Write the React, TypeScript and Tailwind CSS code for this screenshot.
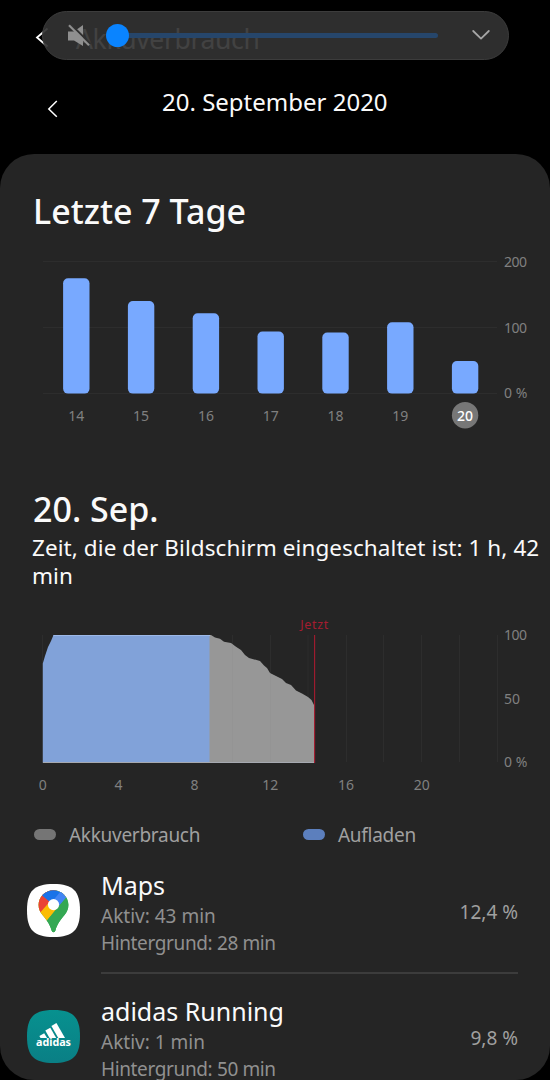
type Day = { day: string; top: number };
type AppUsage = { name: string; active: string; background: string; share: string; icon: React.ReactNode };

const days: Day[] = [
  { day: '14', top: 24.3 },
  { day: '15', top: 47 },
  { day: '16', top: 59.3 },
  { day: '17', top: 77.5 },
  { day: '18', top: 78.5 },
  { day: '19', top: 68.3 },
  { day: '20', top: 107 },
];

const SQUIRCLE = 'M26.5 0C46 0 53 7 53 26.5S46 53 26.5 53 0 46 0 26.5 7 0 26.5 0Z';

function MapsIcon() {
  return (
    <svg className="size-[53px]" viewBox="0 0 53 53">
      <defs>
        <clipPath id="pin">
          <path d="M26.5 6.2C18.3 6.2 11.6 12.8 11.6 20.8C11.6 25 13 28 15.5 31C19.5 36 22.6 39.5 24.5 46.2C25.1 48.8 27.9 48.8 28.5 46.2C30.4 39.5 33.5 36 37.5 31C40 28 41.4 25 41.4 20.8C41.4 12.8 34.7 6.2 26.5 6.2Z" />
        </clipPath>
      </defs>
      <path d={SQUIRCLE} fill="#fff" />
      <g clipPath="url(#pin)">
        <rect width="53" height="53" fill="#34a853" />
        <path d="M0 0H53L39.7 12.8L19 37.8L0 40Z" fill="#fbbc04" />
        <path d="M0 0H30L26.5 20.5L22.5 18L8 34.5Z" fill="#ea4335" />
        <path d="M11 8L22 17.2L26.5 20.6L37.3 8L30 0H14Z" fill="#1a73e8" />
        <path d="M23.5 19.5L36.5 4L45 8L30.5 23.8Z" fill="#4285f4" />
        <path d="M39.9 12.6L19.5 37L24 53H53V10Z" fill="#34a853" />
      </g>
      <circle cx="26.5" cy="20.6" r="5.6" fill="#fff" />
    </svg>
  );
}

function AdidasIcon() {
  return (
    <svg className="size-[53px]" viewBox="0 0 53 53">
      <defs>
        <linearGradient id="teal" x1="0" y1="0" x2="0" y2="1">
          <stop offset="0" stopColor="#07918f" />
          <stop offset="1" stopColor="#0a7f85" />
        </linearGradient>
      </defs>
      <path d={SQUIRCLE} fill="url(#teal)" />
      <path d="M24.4 16L29.4 13L38 28H31.3Z" fill="#fff" />
      <path d="M18.3 20.6L23.3 17.8L29.2 28H22.5Z" fill="#fff" />
      <path d="M12.4 26L17.2 23.2L20.1 28H13.5Z" fill="#fff" />
      <text x="26.5" y="36" textAnchor="middle" textLength="35" lengthAdjust="spacingAndGlyphs" fontSize="10.5" fontWeight="700" fill="#fff">
        adidas
      </text>
    </svg>
  );
}

const apps: AppUsage[] = [
  { name: 'Maps', active: 'Aktiv: 43 min', background: 'Hintergrund: 28 min', share: '12,4 %', icon: <MapsIcon /> },
  { name: 'adidas Running', active: 'Aktiv: 1 min', background: 'Hintergrund: 50 min', share: '9,8 %', icon: <AdidasIcon /> },
];

function VolumePanel() {
  return (
    <div className="absolute left-[42px] top-[11px] flex h-[49px] w-[467px] items-center rounded-full border border-[#3c3c3c] bg-[#323232]/92">
      <svg className="ml-[24px] h-[24px] w-[24px] shrink-0" viewBox="0 0 24 24">
        <path d="M1 7.5H7L16 1V22L7 16.5H1Z" fill="#8f8f8f" />
        <path d="M3.6 0.2L23.3 19.9" stroke="#303030" strokeWidth="2.2" />
        <path d="M2 1.2L22 21.2" stroke="#8f8f8f" strokeWidth="2.2" />
      </svg>
      <div className="relative ml-[16px] h-[5px] w-[331px] shrink-0">
        <div className="ml-[8px] h-[5px] w-[323px] rounded-full bg-[#26466b]" />
        <div className="absolute -left-[1px] -top-[9px] size-[23px] rounded-full bg-[#0a84ff]" />
      </div>
      <svg className="ml-[33px] mt-[-2px] h-[12px] w-[20px] shrink-0" viewBox="0 0 20 12" fill="none" stroke="#a6a6a6" strokeWidth="1.8" strokeLinecap="round" strokeLinejoin="round">
        <path d="M2.2 2L10 9.6L17.8 2" />
      </svg>
    </div>
  );
}

function WeekChart() {
  return (
    <svg className="block overflow-visible" width="550" height="182" viewBox="0 254 550 182" fontSize="14" fill="#808080">
      {[261.5, 327.5, 393.5].map((y) => (
        <path key={y} d={`M43 ${y}H497`} stroke="#2d2d2d" />
      ))}
      {days.map(({ day, top }, i) => {
        const cx = 76.3 + i * 64.8;
        const current = day === '20';
        return (
          <g key={day}>
            <rect x={cx - 13.2} y={top + 254} width="26.4" height={139.6 - top} rx="5" fill="#78a9ff" />
            {current && <circle cx={cx} cy="415.2" r="13.2" fill="#777" />}
            <text x={cx} y="420.5" textAnchor="middle" fill={current ? '#fff' : '#808080'} fontWeight={current ? 500 : 400}>
              {day}
            </text>
          </g>
        );
      })}
      <text x="504" y="266.5" textLength="23">200</text>
      <text x="504" y="332.5" textLength="23">100</text>
      <text x="504" y="398">0 %</text>
    </svg>
  );
}

function DayChart() {
  return (
    <svg className="block overflow-visible" width="550" height="182" viewBox="0 614 550 182" fontSize="14" fill="#808080">
      {[42.5, 80.5, 118.5, 156.5, 194.5, 232.5, 270.5, 308, 346.5, 383.5, 421.5, 459.5, 497.5].map((x) => (
        <path key={x} d={`M${x} 635V762`} stroke="#2d2d2d" />
      ))}
      <path d="M42.8 763V663.5L45 656L48 647L51 641L53.5 635H210V763Z" fill="#81a2d9" />
      <path
        d="M209.5 763V635H211L215 637.5L220 638.7L224 641.7L231 643L236 646.8L241 650L245 655L249 658L260 661L264 665.5L267 668L270 673L276 676L282 679L286 683L291 685L296 690.5L302 693.5L308 697L311.5 700L314.5 706V763Z"
        fill="#979797"
      />
      <path d="M232.5 645V762M270.5 674V762" stroke="#949494" />
      <path d="M53.5 635.5H210" stroke="#9db9e8" />
      <path d="M43 762.5H314" stroke="#a6a9b0" />
      <path d="M314.6 635V763" stroke="#a51c30" strokeWidth="1.1" />
      <text x="314.3" y="629" textAnchor="middle" fontSize="12.5" fill="#a51c30" textLength="28">Jetzt</text>
      {[0, 4, 8, 12, 16, 20].map((h) => (
        <text key={h} x={42.8 + h * 18.95} y="789.7" textAnchor="middle">{h}</text>
      ))}
      <text x="504" y="640" textLength="23">100</text>
      <text x="504" y="703.5">50</text>
      <text x="504" y="766.8">0 %</text>
    </svg>
  );
}

export default function App() {
  return (
    <div className="relative h-[1080px] w-[550px] overflow-hidden bg-black font-['Noto_Sans',sans-serif] text-[#fafafa]">
      <header className="flex h-[80px] items-start pl-[35px] pt-[18px]">
        <svg className="mt-[9px] h-[21px] w-[14px]" viewBox="0 0 14 21" fill="none" stroke="#fff" strokeWidth="1.8">
          <path d="M12.5 1.5L2 10.5L12.5 19.5" />
        </svg>
        <h1 className="ml-[27px] mt-px text-[26.5px] leading-[40px] tracking-[-0.35px]">Akkuverbrauch</h1>
      </header>
      <VolumePanel />

      <div className="flex h-[74px] items-start pl-[47px]">
        <svg className="mt-[20px] h-[18px] w-[11px]" viewBox="0 0 11 18" fill="none" stroke="#fff" strokeWidth="1.5">
          <path d="M9.8 1L1.8 9L9.8 16.8" />
        </svg>
        <p className="ml-[104px] mt-[5px] whitespace-nowrap text-[24px] leading-[34px]">20. September 2020</p>
      </div>

      <main className="h-[926px] overflow-hidden rounded-[34px] bg-[#252525]">
        <h2 className="h-[100px] pl-[33px] pt-[35px] text-[34px] font-medium leading-[44px]">Letzte 7 Tage</h2>
        <WeekChart />
        <h2 className="mt-[51px] pl-[33px] text-[34px] font-medium leading-[44px]">20. Sep.</h2>
        <p className="mt-[3px] h-[80px] pl-[32px] text-[22.5px] leading-[27.6px] tracking-[0.08px]">
          <span className="block whitespace-nowrap">Zeit, die der Bildschirm eingeschaltet ist: 1 h, 42</span>
          <span className="block">min</span>
        </p>
        <DayChart />
        <div className="flex h-[73px] items-start pl-[34px] pt-[24px] text-[19px] leading-[30px] tracking-[-0.28px] text-[#a0a0a0]">
          <span className="mt-[9px] h-[11px] w-[22px] rounded-full bg-[#757575]" />
          <span className="ml-[13px] w-[234px]">Akkuverbrauch</span>
          <span className="mt-[9px] h-[11px] w-[22px] rounded-full bg-[#5c7fbd]" />
          <span className="ml-[13px]">Aufladen</span>
        </div>
        <ul>
          {apps.map((app, i) => (
            <li key={app.name} className="flex h-[126px] items-start pl-[27px] pr-[32px]">
              <div className="mt-[15px] shrink-0">{app.icon}</div>
              <div className={`ml-[21px] flex h-[105px] grow items-start justify-between ${i === 0 ? 'border-b-2 border-[#3c3c3c]' : ''}`}>
                <div className="pt-[2px] text-[19px] leading-[27px] text-[#909090]">
                  <p className="text-[25px] leading-[28px] text-[#fafafa]">{app.name}</p>
                  <p className="mt-[4px]">{app.active}</p>
                  <p className="tracking-[-0.37px]">{app.background}</p>
                </div>
                <p className="mt-[29px] text-[19px] leading-[28px] text-[#a0a0a0]">{app.share}</p>
              </div>
            </li>
          ))}
        </ul>
      </main>
    </div>
  );
}
